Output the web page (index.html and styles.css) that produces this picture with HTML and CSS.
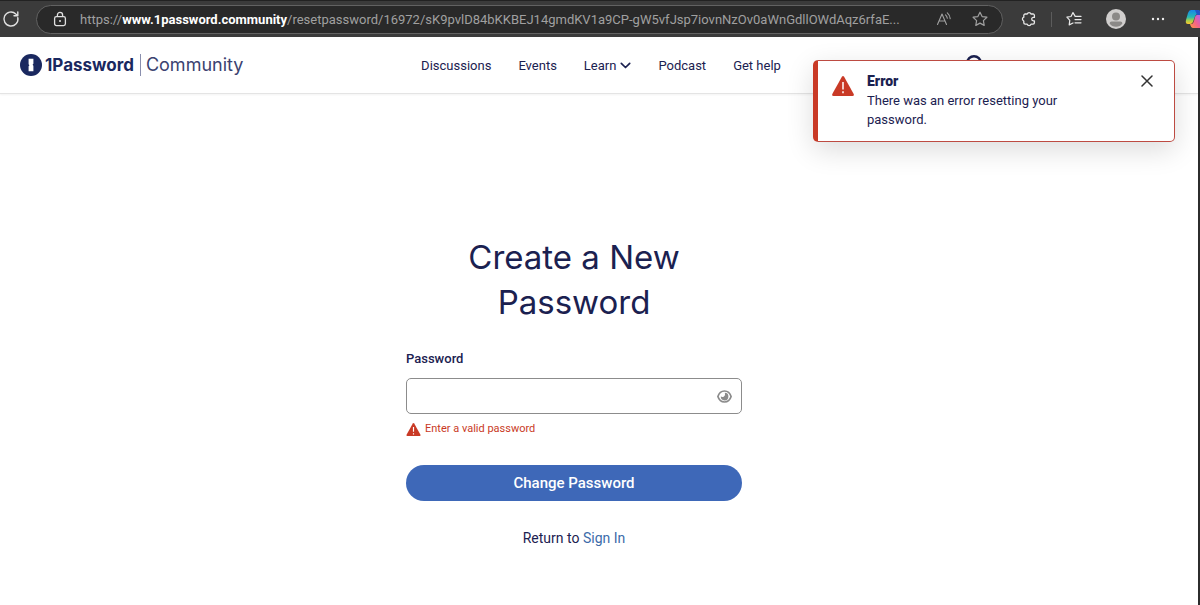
FILE: index.html
```
<!DOCTYPE html>
<html lang="en">
<head>
    <title>Reset password | 1Password Community</title>
    <meta charset="UTF-8">
    <meta name="viewport" content="width=device-width, initial-scale=1.0">
    <link rel="stylesheet" href="styles.css">
</head>
<body>
    <!-- browser toolbar -->
    <div class="toolbar">
        <button class="tool" type="button" aria-label="Reload">
            <svg width="18" height="18" viewBox="0 0 18 18" fill="none" stroke="#e0e0e0" stroke-width="1.4" stroke-linecap="round" stroke-linejoin="round"><path d="M15.8 7.6A7 7 0 1 1 13.8 4L15.6 5.6M15.8 2V5.8H12"/></svg>
        </button>
        <div class="address">
            <svg width="14" height="16" viewBox="0 0 14 16" fill="none" stroke="#e0e0e0" stroke-width="1.3"><rect x="1.6" y="5.6" width="10.8" height="9" rx="1.8"/><path d="M4.4 5.6V4a2.6 2.6 0 0 1 5.2 0v1.6"/><circle cx="7" cy="10" r="1" fill="#e0e0e0" stroke="none"/></svg>
            <div class="url">https://<b>www.1password.community</b>/resetpassword/16972/sK9pvlD84bKKBEJ14gmdKV1a9CP-gW5vfJsp7iovnNzOv0aWnGdllOWdAqz6rfaE...</div>
            <button class="tool" type="button" aria-label="Read aloud">
                <svg width="16" height="16" viewBox="0 0 16 16" fill="none" stroke="#a0a0a0" stroke-width="1.1" stroke-linecap="round" stroke-linejoin="round"><path d="M1.5 13.5L6 3L10.5 13.5M3.1 10H8.9M9.5 3.8q1.6 1.4 1.8 3.5M11.3 1.8q2.6 2.2 2.9 5.8"/></svg>
            </button>
            <button class="tool" type="button" aria-label="Add to favorites">
                <svg width="16" height="16" viewBox="0 0 16 16" fill="none" stroke="#a0a0a0" stroke-width="1.2" stroke-linejoin="round"><path d="M8 1.2L10.1 5.6L14.9 6.2L11.4 9.6L12.2 14.4L8 12.1L3.8 14.4L4.6 9.6L1.1 6.2L5.9 5.6Z"/></svg>
            </button>
        </div>
        <div class="tools">
            <button class="tool" type="button" aria-label="Extensions">
                <svg width="16" height="16" viewBox="0 0 16 16" fill="none" stroke="#e8e8e8" stroke-width="1.3" stroke-linejoin="round"><path d="M4.2 3H6.2a2 2 0 0 1 3.8 0h2a1.4 1.4 0 0 1 1.4 1.4V6.4H12.4a1.7 1.7 0 0 0 0 3.4H13.4V11.8a1.4 1.4 0 0 1-1.4 1.4H10a2 2 0 0 1-3.8 0H4.2a1.4 1.4 0 0 1-1.4-1.4V10a2 2 0 0 1 0-3.8V4.4A1.4 1.4 0 0 1 4.2 3Z"/></svg>
            </button>
            <span class="divider"></span>
            <button class="tool" type="button" aria-label="Favorites">
                <svg width="16" height="16" viewBox="0 0 16 16" fill="none" stroke="#e8e8e8" stroke-width="1.2" stroke-linecap="round" stroke-linejoin="round"><path d="M9.2 5.4L7 1.6L5 5.5L.9 6.2L3.8 9.3L3.2 13.9L7 12M9.2 5.4H15M9 8.6h6M9 11.8h6"/></svg>
            </button>
            <button class="tool avatar" type="button" aria-label="Profile">
                <svg width="20" height="20" viewBox="0 0 20 20"><circle cx="10" cy="10" r="10" fill="#d0cecd"/><circle cx="10" cy="7.6" r="4" fill="#8b8987"/><path d="M3.6 14.5q0-2 2-2h8.8q2 0 2 2Q14 17.8 10 17.8T3.6 14.5Z" fill="#8b8987"/></svg>
            </button>
            <button class="tool" type="button" aria-label="Settings and more">
                <svg width="14" height="4" viewBox="0 0 14 4" fill="#eee"><circle cx="2" cy="2" r="1.2"/><circle cx="7" cy="2" r="1.2"/><circle cx="12" cy="2" r="1.2"/></svg>
            </button>
            <button class="tool" type="button" aria-label="Copilot">
                <svg width="15" height="20" viewBox="0 0 15 20">
                    <defs>
                        <linearGradient id="cool" x1="0" y1="0" x2="0" y2="1"><stop offset="0" stop-color="#1686e8"/><stop offset=".5" stop-color="#27b7b5"/><stop offset=".75" stop-color="#a5cf49"/><stop offset="1" stop-color="#ffc52e"/></linearGradient>
                        <linearGradient id="warm" x1="1" y1="0" x2="0" y2="1"><stop offset="0" stop-color="#b262ed"/><stop offset=".5" stop-color="#f4628a"/><stop offset="1" stop-color="#ff9a3d"/></linearGradient>
                    </defs>
                    <path d="M6 1h7q2 0 2 2L12 5Q10 6 9 10L8 13Q7 15 5 15H3Q0 15 1 11L3 4Q4 1 6 1Z" fill="url(#cool)"/>
                    <path d="M12 6h3v13H8q-2 0-3-4h2q1 0 2-3l1-4q.6-2 2-2Z" fill="url(#warm)"/>
                    <path d="M10 1h3q2 0 2 2v3h-3z" fill="#2354c9"/>
                </svg>
            </button>
        </div>
    </div>

    <div class="page">
        <header class="site-header">
            <a class="logo" href="#">
                <svg width="22" height="22" viewBox="0 0 22 22"><circle cx="11" cy="11" r="11" fill="#1a285f"/><path d="M8.6 4.8h4.8v5l-.8 1 .8 1v5.4H8.6v-5l.8-1-.8-1z" fill="#fff"/></svg>
                <span class="brand">1Password</span>
                <span class="community">Community</span>
            </a>
            <nav class="nav">
                <a href="#">Discussions</a>
                <a href="#">Events</a>
                <a href="#">Learn <svg width="11" height="7" viewBox="0 0 11 7" fill="none" stroke="#1b2150" stroke-width="1.7" stroke-linecap="round" stroke-linejoin="round"><path d="M1.3 1.3L5.5 5.5L9.7 1.3"/></svg></a>
                <a href="#">Podcast</a>
                <a href="#">Get help</a>
            </nav>
            <button class="search" type="button" aria-label="Search">
                <svg width="20" height="20" viewBox="0 0 20 20" fill="none" stroke="#1b2150" stroke-width="2.4" stroke-linecap="round"><circle cx="9" cy="8" r="6.8"/><path d="M14 13l4.5 5"/></svg>
            </button>
        </header>

        <main class="content">
            <form class="reset">
                <h1>Create a New Password</h1>
                <label for="password">Password</label>
                <div class="field">
                    <input type="password" id="password" aria-describedby="password-error">
                    <button class="eye" type="button" aria-label="Show password">
                        <svg width="15" height="13" viewBox="0 0 15 13"><path d="M.9 6.5Q2.6 1 7.5 1T14.1 6.5Q12.4 12 7.5 12T.9 6.5Z" fill="none" stroke="#8b8b8b" stroke-width="1.7"/><path d="M7.8 2.8A3.8 3.8 0 1 1 3.8 6.5q1.4.7 2.8.2Q8.6 5.9 7.8 2.8Z" fill="#8b8b8b"/></svg>
                    </button>
                </div>
                <p class="field-error" id="password-error">
                    <svg width="15" height="13" viewBox="0 0 22 20"><path d="M9.9.8Q11-.8 12.1.8L21.7 18q.7 2-1.2 2h-19Q-.4 20 .3 18Z" fill="#c93a26"/><path d="M11 6v7.5M11 15.8v2" stroke="#fff" stroke-width="1.8"/></svg>
                    Enter a valid password
                </p>
                <button class="submit" type="submit">Change Password</button>
                <p class="return">Return to <a href="#">Sign In</a></p>
            </form>
        </main>

        <div class="toast" role="alert">
            <svg width="22" height="20" viewBox="0 0 22 20"><path d="M9.9.8Q11-.8 12.1.8L21.7 18q.7 2-1.2 2h-19Q-.4 20 .3 18Z" fill="#c93a26"/><path d="M11 6v7.5M11 15.2v2" stroke="#fff" stroke-width="1.5"/></svg>
            <div class="toast-text">
                <strong>Error</strong>
                <p>There was an error resetting your password.</p>
            </div>
            <button class="close" type="button" aria-label="Close">
                <svg width="12" height="12" viewBox="0 0 12 12" stroke="#333" stroke-width="1.5" stroke-linecap="round"><path d="M1 1l10 10M11 1L1 11"/></svg>
            </button>
        </div>
    </div>
</body>
</html>
```

FILE: styles.css
```
* {
    box-sizing: border-box;
}
body {
    margin: 0;
    min-height: 100vh;
    display: flex;
    flex-direction: column;
    font-family: Roboto, "Liberation Sans", sans-serif;
    font-size: 13px;
    color: #1b2150;
    background: #fff;
    overflow-x: hidden;
}
h1, p {
    margin: 0;
}
a {
    color: inherit;
    text-decoration: none;
}
button {
    font-family: inherit;
    border: none;
    padding: 0;
    background: none;
    cursor: pointer;
}
svg {
    display: block;
    flex-shrink: 0;
}

/* browser toolbar */
.toolbar {
    display: flex;
    align-items: center;
    height: 37px;
    padding-left: 2px;
    background: #3b3b3b;
    border-top: 1px solid #222;
}
.address {
    flex: 1;
    min-width: 0;
    display: flex;
    align-items: center;
    height: 29px;
    margin-left: 16px;
    padding: 0 14px 0 16px;
    background: #292929;
    border: 1px solid #626262;
    border-radius: 15px;
}
.url {
    flex: 1;
    min-width: 0;
    margin-left: 13px;
    overflow: hidden;
    white-space: nowrap;
    color: #a0a0a0;
}
.url b {
    font-weight: 700;
    color: #fff;
}
.address .tool {
    margin-left: 20px;
}
.tools {
    display: flex;
    align-items: center;
    margin-left: 18px;
}
.divider {
    width: 1px;
    height: 15px;
    margin: 0 14px;
    background: #5c5c5c;
}
.avatar {
    margin: 0 25px 0 24px;
}
.tools .tool:last-child {
    margin-left: 20px;
}

/* page */
.page {
    flex: 1;
    position: relative;
    border-right: 2px solid #2c2c2c;
}
.site-header {
    display: grid;
    grid-template-columns: 1fr auto 1fr;
    align-items: center;
    height: 57px;
    padding: 0 16px 0 20px;
    border-bottom: 1px solid #e4e4e4;
    box-shadow: 0 1px 2px rgba(0, 0, 0, 0.05);
}
.logo {
    display: flex;
    align-items: center;
    font-family: Inter, "Liberation Sans", sans-serif;
    font-size: 18px;
    line-height: 22px;
}
.brand {
    margin-left: 3px;
    padding-right: 6px;
    font-size: 17px;
    font-weight: 700;
    color: #1a285f;
}
.community {
    padding-left: 5px;
    border-left: 1px solid #8a8fae;
    color: #3b4270;
}
.nav {
    display: flex;
    gap: 27px;
}
.nav a {
    display: flex;
    align-items: center;
    gap: 4px;
}
.search {
    margin-left: 184px;
    justify-self: start;
}
.content {
    display: flex;
    justify-content: center;
    padding: 141px 50px 40px 0;
}
.reset {
    display: flex;
    flex-direction: column;
    width: 336px;
}
.reset h1 {
    padding: 0 40px;
    font-family: Inter, "Liberation Sans", sans-serif;
    font-size: 33px;
    font-weight: 400;
    line-height: 45px;
    text-align: center;
}
.reset label {
    margin-top: 24px;
    font-weight: 500;
    line-height: 20px;
}
.field {
    display: flex;
    align-items: center;
    height: 36px;
    margin-top: 9px;
    padding-right: 9px;
    border: 1px solid #8c8c8c;
    border-radius: 5px;
}
.field input {
    flex: 1;
    min-width: 0;
    height: 100%;
    padding: 0 10px;
    border: none;
    outline: none;
    background: none;
    font: inherit;
}
.field-error {
    display: flex;
    align-items: center;
    gap: 4px;
    margin-top: 7px;
    font-size: 11px;
    line-height: 16px;
    color: #c93a26;
}
.submit {
    height: 36px;
    margin-top: 28px;
    border-radius: 18px;
    background: #3e68b8;
    color: #fff;
    font-size: 15px;
    font-weight: 500;
}
.return {
    margin-top: 27px;
    font-size: 14px;
    line-height: 20px;
    text-align: center;
}
.return a {
    color: #3c6ba9;
}

/* error toast */
.toast {
    position: absolute;
    top: 23px;
    right: 23px;
    display: flex;
    align-items: flex-start;
    width: 362px;
    padding: 11px 21px 12px 14px;
    background: #fff;
    border: 1px solid #bd4b42;
    border-left: 5px solid #c93a26;
    border-radius: 5px;
    box-shadow: 0 8px 28px rgba(0, 0, 0, 0.14);
}
.toast > svg {
    margin-top: 4px;
}
.toast-text {
    flex: 1;
    margin: 0 60px 0 13px;
    line-height: 19px;
}
.toast strong {
    display: block;
    font-size: 14px;
    font-weight: 900;
}
.close {
    margin-top: 3px;
}
```
